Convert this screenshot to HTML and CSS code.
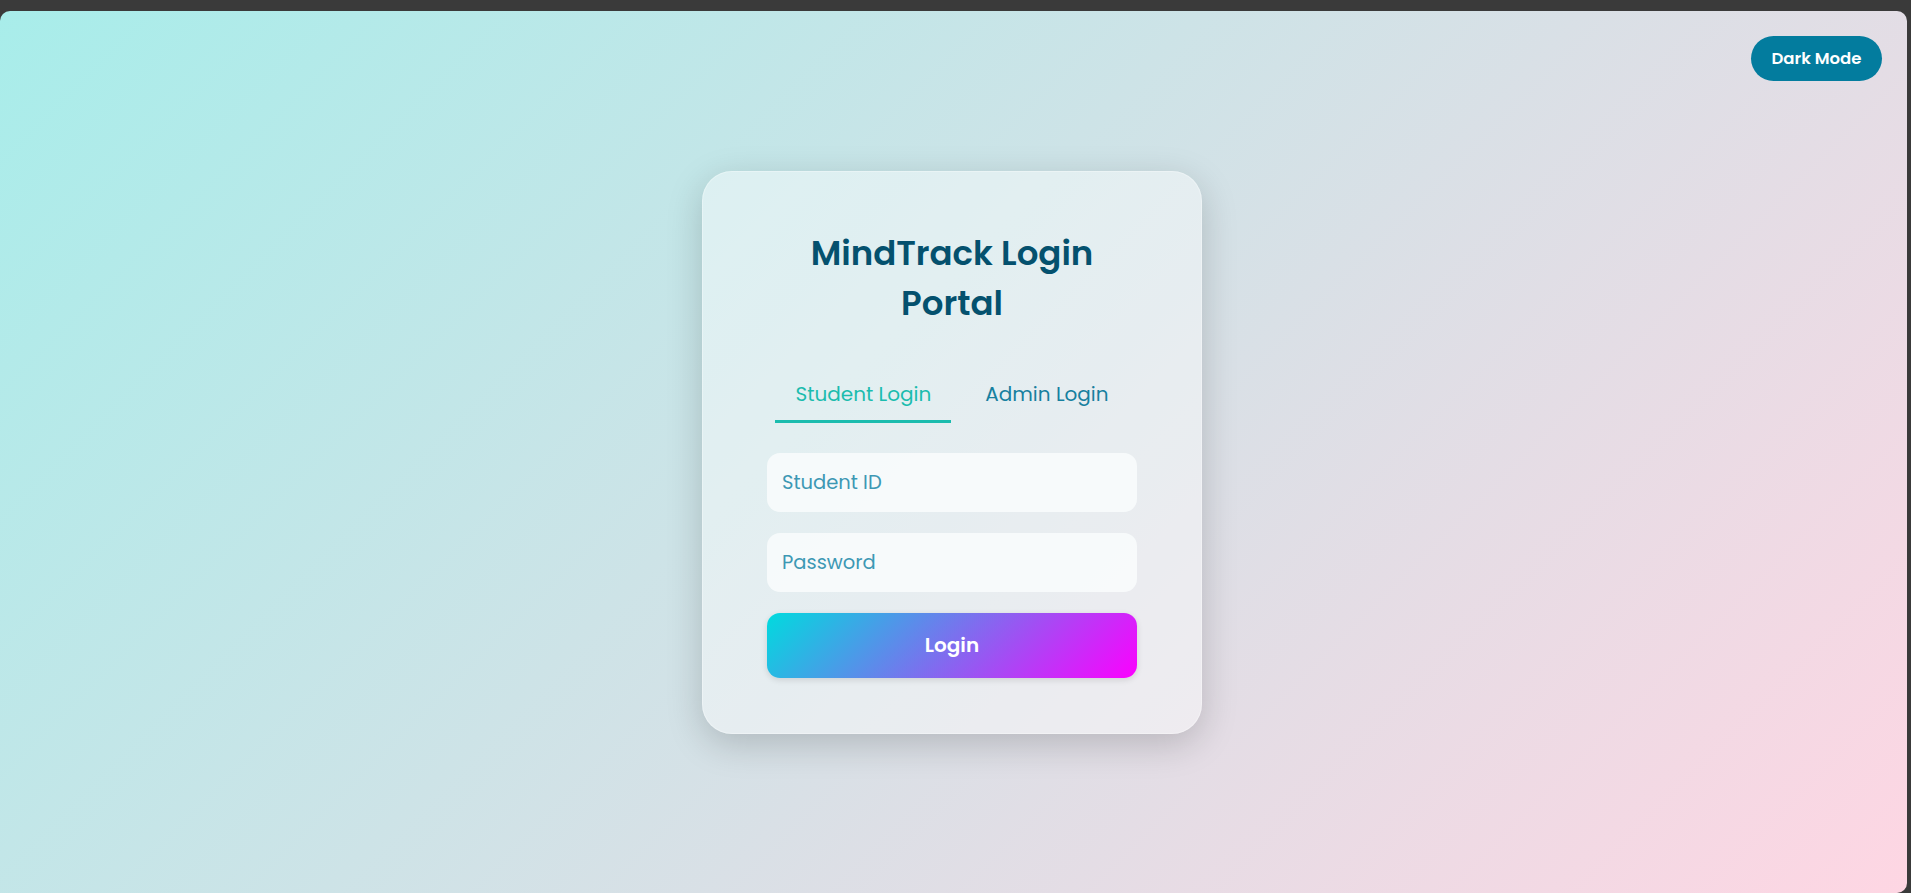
FILE: index.html
```html
<!DOCTYPE html>
<html lang="en">
<head>
<meta charset="utf-8">
<title>MindTrack Login Portal</title>
<link rel="stylesheet" href="styles.css">
</head>
<body>
<div class="page">
  <button class="mode-toggle" type="button">Dark Mode</button>
  <main class="card">
    <h1 class="title">MindTrack Login<br>Portal</h1>
    <div class="tabs">
      <button class="tab active" type="button">Student Login</button>
      <button class="tab" type="button">Admin Login</button>
    </div>
    <form class="form">
      <input class="field" type="text" placeholder="Student ID">
      <input class="field" type="password" placeholder="Password">
      <button class="submit" type="button">Login</button>
    </form>
  </main>
</div>
</body>
</html>
```

FILE: styles.css
```css
* { box-sizing: border-box; }

html, body {
  margin: 0;
  height: 100%;
}

body {
  background: #3a3a3a;
  padding: 11px 4px 0 0;
  font-family: "Poppins", "Open Sans", "Noto Sans", sans-serif;
}

.page {
  position: relative;
  height: 882px;
  padding-right: 3px;
  border-radius: 10px 10px 10px 0;
  background: linear-gradient(135deg, #a8edea 0%, #fed6e3 100%);
  display: flex;
  align-items: center;
  justify-content: center;
  overflow: hidden;
}

.mode-toggle {
  position: absolute;
  top: 25px;
  right: 25px;
  width: 131px;
  height: 45px;
  border: none;
  border-radius: 23px;
  background: #037c9e;
  color: #fff;
  font-family: inherit;
  font-weight: 600;
  font-size: 16.5px;
  cursor: pointer;
}

.card {
  width: 500px;
  padding: 56px 64px 55px;
  border-radius: 30px;
  background: rgba(255, 255, 255, 0.42);
  border: 1px solid rgba(255, 255, 255, 0.3);
  box-shadow: 0 10px 36px rgba(0, 0, 0, 0.18);
  display: flex;
  flex-direction: column;
  align-items: center;
}

.title {
  margin: 0;
  color: #04516e;
  font-size: 34px;
  line-height: 50px;
  font-weight: 600;
  text-align: center;
}

.tabs {
  display: flex;
  gap: 14px;
  margin-top: 43px;
}

.tab {
  border: none;
  background: none;
  padding: 8px 20px 11px;
  font-family: inherit;
  font-size: 20px;
  color: #17809f;
  border-bottom: 3px solid transparent;
  cursor: pointer;
}

.tab.active {
  color: #1bbcae;
  border-bottom-color: #1bbcae;
}

.form {
  width: 100%;
  margin-top: 30px;
  display: flex;
  flex-direction: column;
  gap: 21px;
}

.field {
  width: 100%;
  height: 59px;
  border: none;
  border-radius: 13px;
  background: rgba(250, 252, 253, 0.82);
  padding: 0 15px;
  font-family: inherit;
  font-size: 19.5px;
  color: #2b8fad;
  outline: none;
}

.field::placeholder {
  color: #3d98b4;
}

.submit {
  height: 65px;
  border: none;
  border-radius: 13px;
  background: linear-gradient(135deg, #00dbde 0%, #fc00ff 100%);
  color: #fff;
  font-family: inherit;
  font-weight: 600;
  font-size: 20px;
  box-shadow: 0 2px 6px rgba(0, 0, 0, 0.12);
  cursor: pointer;
}
```
